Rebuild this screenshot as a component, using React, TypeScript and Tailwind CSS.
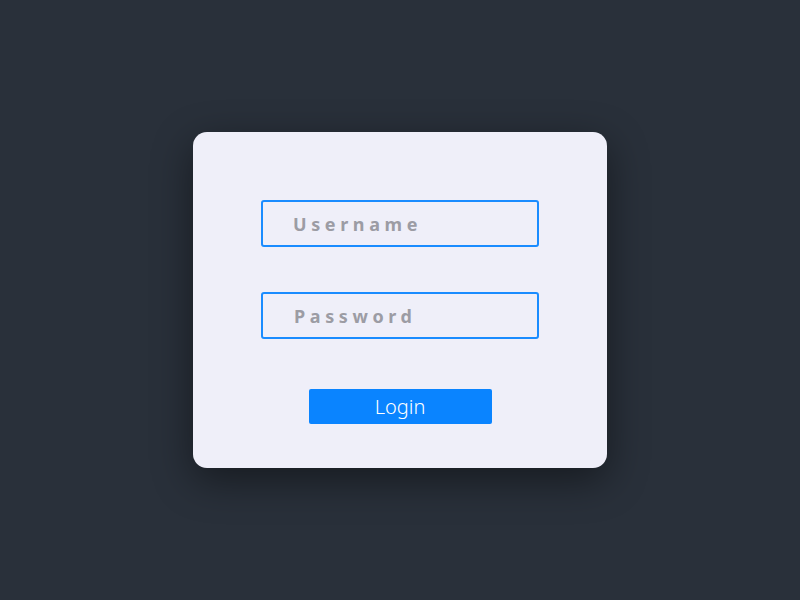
import { useState } from 'react';

const App = () => {
  const [username, setUsername] = useState('');
  const [password, setPassword] = useState('');

  return (
    <div
      className="w-full h-[600px] bg-[#29303a] flex items-center justify-center"
      style={{ fontFamily: '"Noto Sans", "Liberation Sans", sans-serif' }}
    >
      <div className="w-[414px] h-[336px] bg-[#efeff9] rounded-[14px] shadow-[0_12px_40px_rgba(0,0,0,0.45)] flex flex-col items-center pt-[68px]">
        <input
          value={username}
          onChange={(e) => setUsername(e.target.value)}
          placeholder="Username"
          className="w-[278px] h-[47px] border-2 border-[#1a8cff] rounded-[3px] bg-transparent pl-[30px] text-[18px] font-bold tracking-[4.6px] text-[#9a9aa3] placeholder:text-[#9c9ca4] outline-none"
        />
        <input
          type="password"
          value={password}
          onChange={(e) => setPassword(e.target.value)}
          placeholder="Password"
          className="mt-[45px] w-[278px] h-[47px] border-2 border-[#1a8cff] rounded-[3px] bg-transparent pl-[31px] text-[18px] font-bold tracking-[4.6px] text-[#9a9aa3] placeholder:text-[#9c9ca4] outline-none"
        />
        <button className="mt-[50px] w-[183px] h-[35px] bg-[#0a84ff] rounded-[2px] text-white text-[20px] font-light leading-none">
          Login
        </button>
      </div>
    </div>
  );
};

export default App;
